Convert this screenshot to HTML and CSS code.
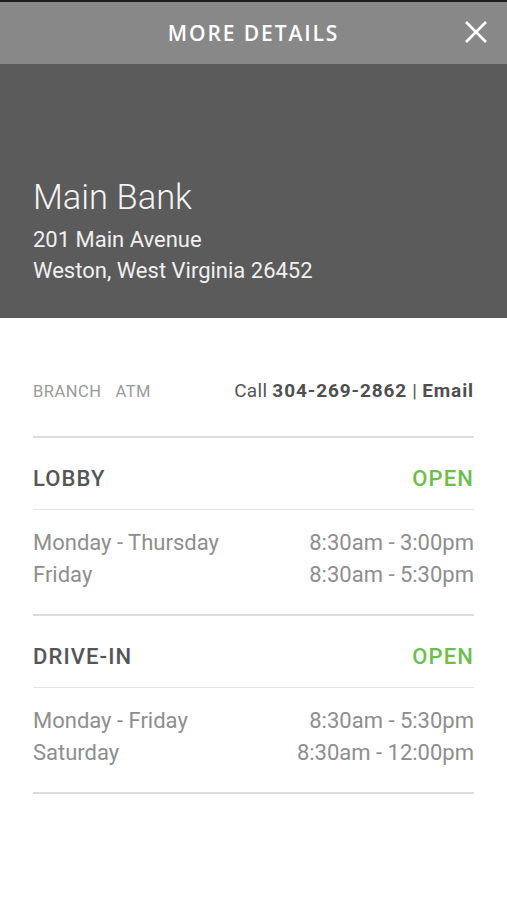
FILE: index.html
```html
<!DOCTYPE html>
<html lang="en">
<head>
<meta charset="utf-8">
<title>More Details</title>
<link rel="stylesheet" href="styles.css">
</head>
<body>
<div class="screen">
  <header class="topbar">
    <h1 class="topbar-title">MORE DETAILS</h1>
    <button class="close-btn" aria-label="Close">
      <svg width="22" height="22" viewBox="0 0 22 22" aria-hidden="true">
        <path d="M1 1 L21 21 M21 1 L1 21" stroke="#fff" stroke-width="2.6" fill="none"/>
      </svg>
    </button>
  </header>

  <section class="hero">
    <h2 class="hero-name">Main Bank</h2>
    <p class="hero-addr">201 Main Avenue<br>Weston, West Virginia 26452</p>
  </section>

  <main class="content">
    <div class="tabs-row">
      <div class="tabs">
        <span class="tab">BRANCH</span>
        <span class="tab">ATM</span>
      </div>
      <div class="contact">Call <b>304-269-2862</b> | <b>Email</b></div>
    </div>

    <section class="hours-block">
      <div class="hours-head">
        <span class="hours-title">LOBBY</span>
        <span class="status-open">OPEN</span>
      </div>
      <div class="hours-list">
        <div class="hours-row"><span>Monday - Thursday</span><span>8:30am - 3:00pm</span></div>
        <div class="hours-row"><span>Friday</span><span>8:30am - 5:30pm</span></div>
      </div>
    </section>

    <section class="hours-block">
      <div class="hours-head">
        <span class="hours-title">DRIVE-IN</span>
        <span class="status-open">OPEN</span>
      </div>
      <div class="hours-list">
        <div class="hours-row"><span>Monday - Friday</span><span>8:30am - 5:30pm</span></div>
        <div class="hours-row"><span>Saturday</span><span>8:30am - 12:00pm</span></div>
      </div>
    </section>
  </main>
</div>
</body>
</html>
```
FILE: styles.css
```css
* { box-sizing: border-box; }

html, body {
  margin: 0;
  padding: 0;
  background: #ffffff;
}

body {
  font-family: Roboto, "Liberation Sans", sans-serif;
  width: 507px;
  min-height: 900px;
}

.topbar {
  height: 64px;
  border-top: 2px solid #1e1e1e;
  background: #888888;
  display: flex;
  align-items: center;
  justify-content: center;
  position: relative;
}

.topbar-title {
  margin: 0;
  font-family: "Open Sans", "Liberation Sans", sans-serif;
  font-weight: 600;
  font-size: 21px;
  letter-spacing: 1.9px;
  color: #ffffff;
  line-height: 1;
}

.close-btn {
  position: absolute;
  right: 20px;
  top: 19px;
  width: 22px;
  height: 22px;
  padding: 0;
  border: 0;
  background: none;
  display: block;
}

.close-btn svg { display: block; }

.hero {
  background: #5b5b5b;
  height: 254px;
  padding: 113px 33px 0;
  color: #ffffff;
}

.hero-name {
  margin: 0;
  font-weight: 300;
  font-size: 34.5px;
  line-height: 40px;
  color: #f4f4f4;
}

.hero-addr {
  margin: 7px 0 0;
  font-size: 22px;
  line-height: 31px;
  color: #f0f0f0;
}

.content {
  padding: 0 33px;
}

.tabs-row {
  margin-top: 61px;
  padding-bottom: 32px;
  border-bottom: 2px solid #dddddd;
  display: flex;
  justify-content: space-between;
  align-items: baseline;
  line-height: 24px;
}

.tabs {
  display: flex;
  gap: 14px;
}

.tab {
  font-size: 16.5px;
  letter-spacing: 0.5px;
  color: #9a9a9a;
}

.contact {
  font-size: 19px;
  letter-spacing: 0.3px;
  color: #555555;
}

.contact b {
  font-weight: 700;
  letter-spacing: 0.9px;
  color: #4f4f4f;
}

.hours-block {
  border-bottom: 2px solid #dddddd;
}

.hours-head {
  display: flex;
  justify-content: space-between;
  align-items: baseline;
  padding: 26px 0 15px;
  border-bottom: 1px solid #e6e6e6;
  font-size: 22px;
  line-height: 30px;
  font-weight: 500;
  letter-spacing: 1.1px;
}

.hours-title { color: #555555; }

.status-open { color: #6cc04a; }

.hours-list {
  padding: 17px 0 23px;
}

.hours-row {
  display: flex;
  justify-content: space-between;
  font-size: 22px;
  line-height: 32px;
  color: #8e8e8e;
}
```
